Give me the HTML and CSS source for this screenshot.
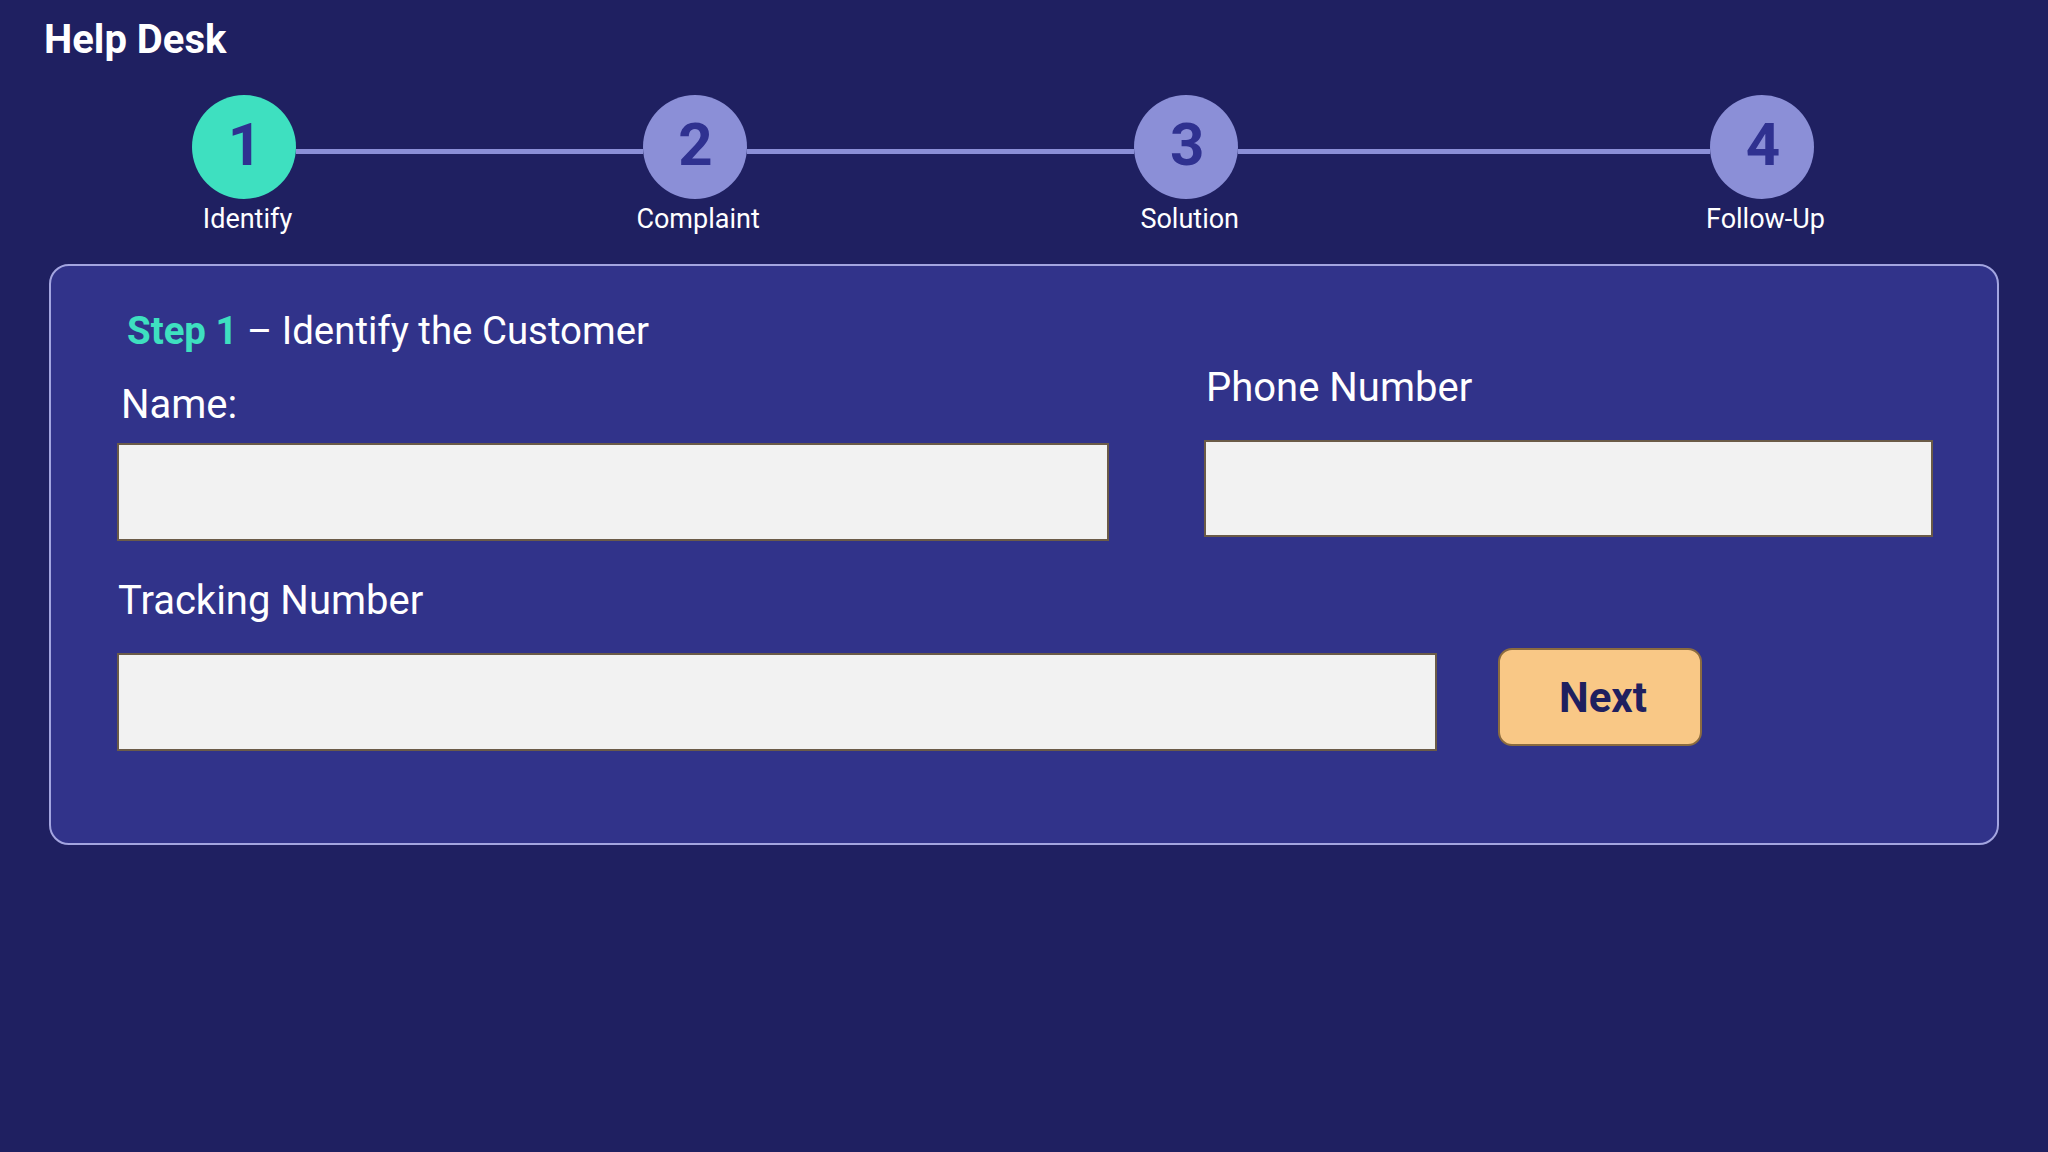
FILE: index.html
```html
<!DOCTYPE html>
<html lang="en">
<head>
<meta charset="utf-8">
<title>Help Desk</title>
<link rel="stylesheet" href="styles.css">
</head>
<body>
  <h1 class="app-title">Help Desk</h1>

  <div class="stepper">
    <div class="step">
      <div class="step-circle active">1</div>
      <div class="step-label">Identify</div>
    </div>
    <div class="connector c1"></div>
    <div class="step">
      <div class="step-circle">2</div>
      <div class="step-label">Complaint</div>
    </div>
    <div class="connector c2"></div>
    <div class="step">
      <div class="step-circle">3</div>
      <div class="step-label">Solution</div>
    </div>
    <div class="connector c3"></div>
    <div class="step">
      <div class="step-circle">4</div>
      <div class="step-label">Follow-Up</div>
    </div>
  </div>

  <section class="card">
    <h2 class="card-heading"><span class="step-tag">Step 1</span> – Identify the Customer</h2>

    <div class="field-row">
      <div class="field field-name">
        <label class="field-label" for="name">Name:</label>
        <input class="field-input" id="name" type="text">
      </div>
      <div class="field field-phone">
        <label class="field-label" for="phone">Phone Number</label>
        <input class="field-input" id="phone" type="text">
      </div>
    </div>

    <label class="field-label tracking-label" for="tracking">Tracking Number</label>
    <div class="tracking-row">
      <input class="field-input tracking-input" id="tracking" type="text">
      <button class="next-btn" type="button">Next</button>
    </div>
  </section>
</body>
</html>
```

FILE: styles.css
```css
* {
  box-sizing: border-box;
}

html, body {
  margin: 0;
  padding: 0;
}

body {
  width: 2048px;
  min-height: 1152px;
  background: #1f2061;
  font-family: Roboto, "Liberation Sans", sans-serif;
  color: #ffffff;
  overflow: hidden;
}

.app-title {
  margin: 16px 0 0 44px;
  font-size: 40px;
  line-height: 47px;
  font-weight: 700;
}

/* Stepper */
.stepper {
  display: flex;
  align-items: flex-start;
  width: 1622px;
  margin: 32px 0 0 192px;
}

.step {
  width: 104px;
  flex: 0 0 104px;
  display: flex;
  flex-direction: column;
  align-items: center;
}

.step-circle {
  width: 104px;
  height: 104px;
  border-radius: 50%;
  background: #8b8fd7;
  color: #2f3190;
  font-size: 60px;
  font-weight: 700;
  display: flex;
  align-items: center;
  justify-content: center;
  padding: 0 0 5px 2px;
}

.step-circle.active {
  background: #3ee0c0;
}

.step-label {
  margin-top: 5px;
  padding-left: 7px;
  font-size: 27px;
  line-height: 31px;
  white-space: nowrap;
}

.connector {
  flex-basis: 0;
  height: 5px;
  margin-top: 54px;
  background: #8b8fd7;
}

.c1 { flex-grow: 346; }
.c2 { flex-grow: 387; }
.c3 { flex-grow: 471; }

/* Card */
.card {
  margin: 29px 49px 0 49px;
  background: #31338a;
  border: 2px solid #a3a5e0;
  border-radius: 20px;
  padding: 43px 64px 92px 66px;
}

.card-heading {
  margin: 0 0 0 10px;
  font-size: 38.4px;
  line-height: 44px;
  font-weight: 400;
}

.step-tag {
  color: #3ee0c0;
  font-weight: 700;
}

.field-row {
  display: grid;
  grid-template-columns: 992px 729px;
  column-gap: 95px;
  align-items: start;
}

.field {
  display: flex;
  flex-direction: column;
}

.field-label {
  display: block;
  font-size: 40px;
  line-height: 47px;
  font-weight: 400;
  color: #ffffff;
}

.field-name .field-label {
  margin: 28px 0 15px 4px;
}

.field-phone .field-label {
  margin: 11px 0 29px 2px;
}

.field-input {
  display: block;
  width: 100%;
  height: 98px;
  background: #f2f2f2;
  border: 2px solid #6b5b48;
  border-radius: 0;
  outline: none;
  font-family: inherit;
  font-size: 32px;
  padding: 0 16px;
}

.field-phone .field-input {
  height: 97px;
}

.tracking-label {
  margin: 36px 0 0 1px;
}

.tracking-row {
  display: flex;
  align-items: flex-start;
  gap: 61px;
  margin-top: 24px;
}

.tracking-input {
  width: 1320px;
  flex: 0 0 1320px;
  margin-top: 5px;
}

.next-btn {
  width: 204px;
  height: 98px;
  background: #f9c886;
  border: 2px solid #8b6b3f;
  border-radius: 14px;
  color: #1f205f;
  font-family: Roboto, "Liberation Sans", sans-serif;
  font-size: 42px;
  font-weight: 700;
  cursor: pointer;
  padding: 0 0 0 6px;
}
```
